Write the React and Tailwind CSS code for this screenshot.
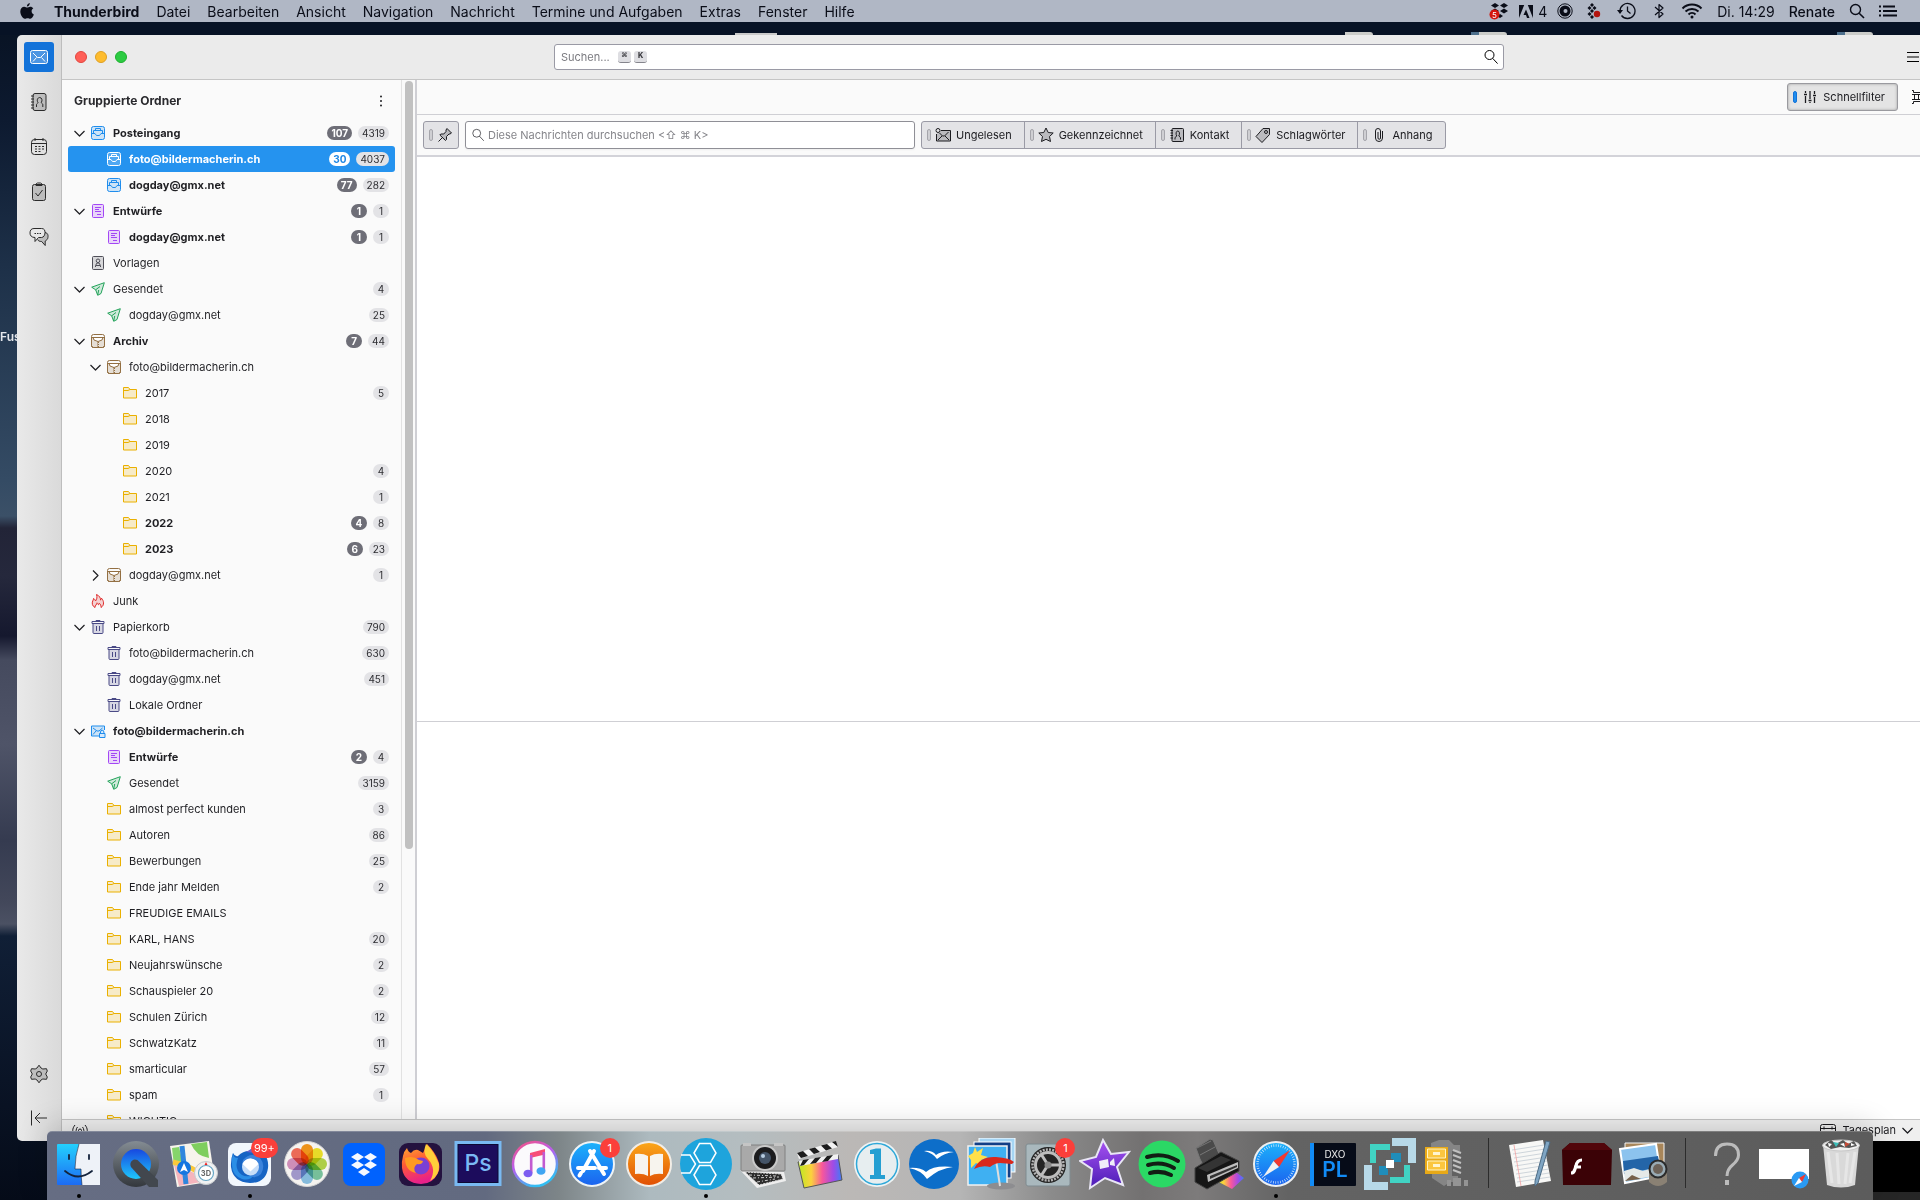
import { useState } from "react";

// ---------- data ----------

const menus = [
  "Datei",
  "Bearbeiten",
  "Ansicht",
  "Navigation",
  "Nachricht",
  "Termine und Aufgaben",
  "Extras",
  "Fenster",
  "Hilfe",
];

const folders = [
  { name: "Posteingang", icon: "inbox", level: 0, open: true, unread: 107, total: 4319 },
  { name: "foto@bildermacherin.ch", icon: "inbox", level: 1, unread: 30, total: 4037 },
  { name: "dogday@gmx.net", icon: "inbox", level: 1, unread: 77, total: 282 },
  { name: "Entwürfe", icon: "draft", level: 0, open: true, unread: 1, total: 1 },
  { name: "dogday@gmx.net", icon: "draft", level: 1, unread: 1, total: 1 },
  { name: "Vorlagen", icon: "template", level: 0 },
  { name: "Gesendet", icon: "sent", level: 0, open: true, total: 4 },
  { name: "dogday@gmx.net", icon: "sent", level: 1, total: 25 },
  { name: "Archiv", icon: "archive", level: 0, open: true, unread: 7, total: 44 },
  { name: "foto@bildermacherin.ch", icon: "archive", level: 1, open: true },
  { name: "2017", icon: "folder", level: 2, total: 5 },
  { name: "2018", icon: "folder", level: 2 },
  { name: "2019", icon: "folder", level: 2 },
  { name: "2020", icon: "folder", level: 2, total: 4 },
  { name: "2021", icon: "folder", level: 2, total: 1 },
  { name: "2022", icon: "folder", level: 2, unread: 4, total: 8 },
  { name: "2023", icon: "folder", level: 2, unread: 6, total: 23 },
  { name: "dogday@gmx.net", icon: "archive", level: 1, open: false, total: 1 },
  { name: "Junk", icon: "junk", level: 0 },
  { name: "Papierkorb", icon: "trash", level: 0, open: true, total: 790 },
  { name: "foto@bildermacherin.ch", icon: "trash", level: 1, total: 630 },
  { name: "dogday@gmx.net", icon: "trash", level: 1, total: 451 },
  { name: "Lokale Ordner", icon: "trash", level: 1 },
  { name: "foto@bildermacherin.ch", icon: "account", level: 0, open: true, bold: true },
  { name: "Entwürfe", icon: "draft", level: 1, unread: 2, total: 4 },
  { name: "Gesendet", icon: "sent", level: 1, total: 3159 },
  { name: "almost perfect kunden", icon: "folder", level: 1, total: 3 },
  { name: "Autoren", icon: "folder", level: 1, total: 86 },
  { name: "Bewerbungen", icon: "folder", level: 1, total: 25 },
  { name: "Ende jahr Melden", icon: "folder", level: 1, total: 2 },
  { name: "FREUDIGE EMAILS", icon: "folder", level: 1 },
  { name: "KARL, HANS", icon: "folder", level: 1, total: 20 },
  { name: "Neujahrswünsche", icon: "folder", level: 1, total: 2 },
  { name: "Schauspieler 20", icon: "folder", level: 1, total: 2 },
  { name: "Schulen Zürich", icon: "folder", level: 1, total: 12 },
  { name: "SchwatzKatz", icon: "folder", level: 1, total: 11 },
  { name: "smarticular", icon: "folder", level: 1, total: 57 },
  { name: "spam", icon: "folder", level: 1, total: 1 },
  { name: "WICHTIG", icon: "folder", level: 1 },
];

const indent = ["pl-[6px]", "pl-[22px]", "pl-[38px]"];

// ---------- small icons ----------

const folderColors = {
  inbox: "text-[#1f8ded]",
  draft: "text-[#a347f5]",
  template: "text-[#4f4f58]",
  sent: "text-[#22a35a]",
  archive: "text-[#936f42]",
  folder: "text-[#eab000]",
  junk: "text-[#e02b2b]",
  trash: "text-[#4a4a86]",
  account: "text-[#1f8ded]",
};

const tint = { fill: "currentColor", fillOpacity: 0.2 };

const folderShapes = {
  inbox: (
    <>
      <rect x="0.5" y="0.5" width="13" height="13" rx="2" {...tint} />
      <path d="M0.5 7.5H4l1.500 2h3L10 7.500h3.500M2.500 7V4.500h9V7M4.500 4V2.500h5V4" />
    </>
  ),
  draft: (
    <>
      <rect x="1.500" y="0.5" width="11" height="13" rx="1" {...tint} />
      <path d="M4 3.500h6M4 5.500h4M4 7.500h6M6 10.500h4" />
    </>
  ),
  template: (
    <>
      <rect x="1.500" y="0.5" width="11" height="13" rx="1" {...tint} />
      <circle cx="7" cy="4.8" r="1.8" />
      <path d="M4.500 11V9.500L6 7h2l1.500 2.500V11M5 9.500h4" />
    </>
  ),
  sent: <path d="M13.300 0.700L0.700 5.200l4 2.600 2 5.500L10 11.500zM4.700 7.800L9 4.500M6.700 13l1-5" {...tint} />,
  archive: (
    <>
      <rect x="0.5" y="0.5" width="13" height="13" rx="2" />
      <path d="M0.500 3.500h13v8a2 2 0 01-2 2h-9a2 2 0 01-2-2z" {...tint} />
      <path d="M2 3.500h10l-1 2.500-4 1.500L3 6z" fill="#fff" />
      <path d="M6.500 7.500v6M7.500 8v5.500" strokeDasharray="1 1" />
    </>
  ),
  folder: (
    <>
      <path d="M0.500 1.500h5L7 3.500h6.500v8.500h-13z" {...tint} />
      <path d="M0.500 4.500h4.500L7 3.500" />
    </>
  ),
  junk: (
    <path
      d="M4 13.500C1.300 12 .700 9.500 1.700 7c.4-.8.8-1.200.8-2.500C3.700 5 4.300 6 4.500 7 6 5.500 6.300 3 5.500.500c2.900 1.200 4.200 3.500 4 5.500.7-.4 1-.9 1-1.800 2.300 2.500 3.300 6.800-.5 9.300.2-1.800-.5-3.200-1.600-4.200-.2.900-.6 1.300-1 1.500-.2-.9-.7-1.600-1.300-2-.2 1.700-2.200 2.600-2.100 4.700z"
      {...tint}
    />
  ),
  trash: (
    <>
      <path d="M2 3.500h10v9a1 1 0 01-1 1H3a1 1 0 01-1-1z" {...tint} />
      <path d="M1 3.500v-2h12v2zM5 1.200V.500h4v.700M5.500 6v5M8.500 6v5" />
    </>
  ),
  account: (
    <>
      <path d="M8 12H0.500V2h13v4" {...tint} />
      <path d="M2 4l4 3h2l3.500-3M2 10.500L5 7" />
      <path d="M8.500 9.500h5.500v4H8.500zM9.500 9.500V8a1.700 1.700 0 013.400 0v1.500" fill="#d6e9fc" />
    </>
  ),
};

function FolderIcon({ name, selected }) {
  return (
    <svg
      viewBox="0 0 14 14"
      className={`w-[14px] h-[14px] shrink-0 overflow-visible ${selected ? "text-white" : folderColors[name]}`}
      fill="none"
      stroke="currentColor"
    >
      {folderShapes[name]}
    </svg>
  );
}

function Line({ children, className = "w-4 h-4", box = "0 0 16 16" }) {
  return (
    <svg viewBox={box} className={`shrink-0 ${className}`} fill="none" stroke="currentColor" strokeLinejoin="round">
      {children}
    </svg>
  );
}

const Magnifier = ({ className }) => (
  <Line className={className}>
    <circle cx="6.500" cy="6" r="4.500" />
    <path d="M9.800 9.500l4.500 4.800" strokeLinecap="round" />
  </Line>
);

const spaceIcons = {
  Adressbuch: (
    <>
      <rect x="4" y="1.500" width="13" height="17" rx="2" {...tint} />
      <path d="M2 4h3M2 7h3M2 10h3M2 13h3M2 16h3M7.500 15v-2.500c0-1 1.500-1 1.500-2-1.500-2-.500-5 1.700-5s3 3 1.600 5c0 1 1.500 1 1.500 2V15" />
    </>
  ),
  Kalender: (
    <>
      <rect x="2.500" y="2.500" width="15" height="15" rx="3" />
      <path d="M2.500 6.500h15M6 1v3M14 1v3" />
      <path d="M6 9.500h9M6 12h9M6 14.500h7" strokeDasharray="2 1.500" />
    </>
  ),
  Aufgaben: (
    <>
      <rect x="3.500" y="2.500" width="13" height="16" rx="2" {...tint} />
      <path d="M7 3.500V2l1.500-1h3L13 2v1.500zM6.500 11l2.500 3 4.500-6" />
    </>
  ),
  Chat: (
    <>
      <path d="M16 5.500c3 .5 3.500 3 2.700 6-.5 1.500-2 2-2.500 2.500V18.500l-3.500-4c-2 0-3.500-.5-4-2" {...tint} />
      <path d="M5 1.500h7.500c3 0 3.500 2 3.500 4s-1 5-3.500 5H9.500L6 14.500v-4c-3.500 0-5-2-5-4.500s1-4.500 4-4.500z" fill="#e8e8e8" />
      <path d="M5.500 6.500h6.500" strokeDasharray="1.500 1" />
    </>
  ),
};

function SpaceButton({ label, children, active }) {
  return (
    <button
      type="button"
      aria-label={label}
      className={`w-[30px] h-[30px] rounded-[3px] flex items-center justify-center ${
        active ? "bg-[#1373d9] text-white" : "text-[#2b2b2b]"
      }`}
    >
      <Line className="w-5 h-5" box="0 0 20 20">
        {children}
      </Line>
    </button>
  );
}

// ---------- menu bar ----------

function MenuBar() {
  return (
    <header className="h-[22px] shrink-0 flex items-center justify-between bg-[#b0b7c5] text-[14px] text-[#0a0d18] pl-[19px] pr-[23px] whitespace-nowrap">
      <nav className="flex items-center gap-[17px]">
        <svg viewBox="0 0 18 16" className="w-[18px] h-4" fill="currentColor">
          <path
            transform="translate(1)"
            d="M9.800 0c.1 1.800-1.300 3.400-2.900 3.500C6.700 1.800 8.200.2 9.800 0zM7.200 4.500c.7 0 1.700-.8 3.100-.8 1.200 0 2.300.6 3 1.600-2.500 1.500-2.100 5.200.6 6.200-.5 1.500-2 4.300-3.600 4.300-1 0-1.500-.6-2.700-.6s-1.700.6-2.700.6C2.700 15.800.300 11.800.300 8.600c0-3.200 2-4.900 3.900-4.900 1.300 0 2.300.8 3 .8z"
          />
        </svg>
        <button type="button" className="font-bold">Thunderbird</button>
        {menus.map((m) => (
          <button type="button" key={m}>{m}</button>
        ))}
      </nav>
      <div className="flex items-center gap-[14px]">
        <div className="flex items-center gap-[10px]">
          <svg viewBox="0 0 20 18" className="w-5 h-[18px]" fill="#0a0d18">
            <path d="M6 1l4 2.500L6 6 2 3.500zM15 1l4 2.500L15 6l-4-2.500zM6 6.500L10 9l-4 2.500L2 9zM15 6.500L19 9l-4 2.500L11 9zM11 12l3 2-3 2-3-2z" />
            <circle cx="5.500" cy="12.500" r="5" fill="#d3150f" />
            <text x="5.500" y="15.500" fontSize="8" fill="#fff" textAnchor="middle">5</text>
          </svg>
          <span className="flex items-center gap-[5px]">
            <svg viewBox="0 0 14 13" className="w-[14px] h-[13px]" fill="currentColor">
              <path d="M0 0h5.200L0 13zM14 0v13L8.800 0zM7 4.500L10.500 13H8L7 10H4.500z" />
            </svg>
            4
          </span>
          <svg viewBox="0 0 16 16" className="w-4 h-4">
            <circle cx="8" cy="8" r="7.200" fill="none" stroke="#0a0d18" />
            <circle cx="8" cy="8" r="5.500" fill="#0a0d18" />
            <circle cx="8.500" cy="8" r="2" fill="#b0b7c5" />
          </svg>
        </div>
        <svg viewBox="0 0 14 16" className="w-[14px] h-4" fill="#0a0d18">
          <path d="M5 0l2 2-2 2-2-2zM2.500 3l2 2-2 2-2-2zM7.500 3l2 2-2 2-2-2zM5 6l2 2-2 2-2-2zM2.500 9l2 2-2 2-2-2zM5 12l2 2-2 2-2-2z" />
          <circle cx="10" cy="11" r="3.200" fill="#b3130e" />
        </svg>
        <Line className="w-[22px] h-[18px]" box="0 0 22 18">
          <path d="M5 9a7.500 7.500 0 111.500 4.500M12.500 4.500V9l3 2.500" strokeWidth="1.300" />
          <path d="M2 8h6l-3 4z" fill="currentColor" stroke="none" />
        </Line>
        <Line className="w-4 h-4">
          <path d="M4 4l8 7-4 3.500v-13L12 5l-8 7" strokeWidth="1.200" />
        </Line>
        <Line className="w-[22px] h-4" box="0 0 22 16">
          <path d="M1.500 5.500a13.500 13.500 0 0119 0M4.500 8.500a9.500 9.500 0 0113 0M7.500 11.500a5 5 0 017 0" strokeWidth="2" />
          <circle cx="11" cy="14" r="1.500" fill="currentColor" stroke="none" />
        </Line>
        <span>Di. 14:29</span>
        <span className="font-medium">Renate</span>
        <Line className="w-4 h-4">
          <circle cx="6.500" cy="6.500" r="5" strokeWidth="1.400" />
          <path d="M10.200 10.200L15 15" strokeWidth="1.600" />
        </Line>
        <Line className="w-[18px] h-3" box="0 0 18 12">
          <path d="M0 1.500h2M4 1.500h12M0 6h2M4 6h14M0 10.500h2M4 10.500h14" strokeWidth="2" />
        </Line>
      </div>
    </header>
  );
}

// ---------- thunderbird window ----------

function SpacesBar() {
  return (
    <aside className="w-[45px] shrink-0 flex flex-col justify-between items-center pt-[7px] pb-2 border-r border-[#bdbdbd] bg-linear-to-r from-[#e9e9e9] to-[#dadada]">
      <div className="flex flex-col gap-[15px]">
        <SpaceButton label="Mail" active>
          <rect x="1.500" y="3.500" width="17" height="13" rx="2" fill="#fff" fillOpacity="0.25" />
          <path d="M4 6l4.500 4.500h3L16 6M4 14.500l3.500-4M16 14.500l-3.500-4" />
        </SpaceButton>
        {Object.entries(spaceIcons).map(([label, shape]) => (
          <SpaceButton key={label} label={label}>{shape}</SpaceButton>
        ))}
      </div>
      <div className="flex flex-col gap-[14px]">
        <SpaceButton label="Einstellungen">
          <path
            d="M8 4L10 1.200 12 4l1.800 1 3.700-.300.800 2.300-1.600 3 1.600 3-.8 2.300-3.700-.3L12 16l-2 2.800L8 16l-1.800-1-3.700.3-.8-2.300 1.600-3-1.600-3 .8-2.300 3.700.3z"
            {...tint}
          />
          <circle cx="10" cy="10" r="2.500" />
        </SpaceButton>
        <SpaceButton label="Leiste ausblenden">
          <path d="M2.500 2.500v15M18 10H6M11 5l-5 5 5 5" />
        </SpaceButton>
      </div>
    </aside>
  );
}

const Key = ({ children }) => (
  <kbd className="w-[13px] h-3 rounded-[3px] bg-[#dedee2] border-b border-[#85858c] text-[9px] leading-[11px] font-bold text-center text-[#3a3a3f]">
    {children}
  </kbd>
);

function TitleBar() {
  return (
    <div className="h-[45px] shrink-0 flex items-center bg-[#ebebeb] border-b border-[#c5c5c5]">
      <div className="w-[492px] shrink-0 flex gap-2 pl-[13px]">
        <button type="button" aria-label="Schließen" className="w-3 h-3 rounded-full border border-[#e2463f] bg-[#ff5f57]" />
        <button type="button" aria-label="Minimieren" className="w-3 h-3 rounded-full border border-[#dfa023] bg-[#febc2e]" />
        <button type="button" aria-label="Maximieren" className="w-3 h-3 rounded-full border border-[#1daf2e] bg-[#2ccb42]" />
      </div>
      <div className="relative flex-1 h-[26px] flex items-center bg-white border border-[#9a9aa5] rounded-[3px] pr-1">
        <input
          type="search"
          aria-label="Suchen"
          placeholder="Suchen..."
          className="w-full h-full pl-[6px] bg-transparent text-[11px] placeholder-[#7b7b80] focus:outline-none"
        />
        <span className="absolute left-[63px] flex gap-[3px]">
          <Key>⌘</Key>
          <Key>K</Key>
        </span>
        <button type="button" aria-label="Suche starten">
          <Magnifier className="w-4 h-4" />
        </button>
      </div>
      <div className="w-[416px] shrink-0 flex justify-end">
        <button type="button" aria-label="Menü">
          <Line className="w-[13px] h-4" box="0 0 13 16">
            <path d="M0 3.500h12M0 8h12M0 12.500h12" strokeWidth="1.200" />
          </Line>
        </button>
      </div>
    </div>
  );
}

function FolderRow({ folder, selected, onSelect }) {
  const strong = folder.unread || folder.bold;
  return (
    <li>
      <button
        type="button"
        onClick={onSelect}
        className={`w-full h-[26px] flex items-center pr-[6px] rounded-[3px] text-[11px] text-left ${indent[folder.level]} ${
          selected ? "bg-[#2593ef] text-white" : "text-[#1f1f23]"
        } ${strong ? "font-bold" : ""}`}
      >
        <span className="w-[17px] shrink-0">
          {folder.open !== undefined && (
            <Line className="w-[11px] h-[11px]" box="0 0 11 11">
              <path d={folder.open ? "M0.500 3l5 5 5-5" : "M3 0.500l5 5-5 5"} strokeWidth="1.200" />
            </Line>
          )}
        </span>
        <FolderIcon name={folder.icon} selected={selected} />
        <span className="flex-1 pl-2 truncate">{folder.name}</span>
        {folder.unread && (
          <span
            className={`h-[14px] min-w-4 px-1 rounded-full text-[10px] leading-[14px] text-center font-bold ${
              selected ? "bg-white text-[#1d86e4]" : "bg-[#6e6e77] text-white"
            }`}
          >
            {folder.unread}
          </span>
        )}
        {folder.total && (
          <span className="ml-[6px] h-[14px] min-w-4 px-1 rounded-full bg-[#e3e3e6] text-[#2d2d31] text-[10px] leading-[14px] text-center font-normal">
            {folder.total}
          </span>
        )}
      </button>
    </li>
  );
}

function FolderPane() {
  const [current, setCurrent] = useState(1);

  return (
    <section className="w-[355px] shrink-0 flex bg-[#fafafa] border-r-2 border-[#cfcfd4]">
      <div className="flex-1 min-w-0 overflow-hidden border-r border-[#e2e2e2]">
        <div className="h-10 pt-[2px] flex items-center justify-between pl-3 pr-[13px]">
          <h2 className="text-[12px] font-bold text-[#2a2a2e]">Gruppierte Ordner</h2>
          <button type="button" aria-label="Ordneroptionen">
            <svg viewBox="0 0 14 14" className="w-[14px] h-[14px]" fill="#1f1f23">
              <circle cx="7" cy="2.500" r="1" />
              <circle cx="7" cy="7" r="1" />
              <circle cx="7" cy="11.500" r="1" />
            </svg>
          </button>
        </div>
        <ul className="pl-[6px] pr-[6px]">
          {folders.map((f, i) => (
            <FolderRow key={i} folder={f} selected={i === current} onSelect={() => setCurrent(i)} />
          ))}
        </ul>
      </div>
      <div className="w-[13px] shrink-0 pt-px px-[3px]">
        <div className="h-[74%] w-2 rounded-full bg-[#c1c1c1]" />
      </div>
    </section>
  );
}

const filters = [
  {
    label: "Ungelesen",
    icon: (
      <>
        <path d="M6 3.500h9.500v10.500H1.500V7" {...tint} />
        <circle cx="3" cy="3.500" r="2" />
        <path d="M4.500 6l3 3h2l4-4M3 13l4-4M14 13l-4-4" />
      </>
    ),
  },
  {
    label: "Gekennzeichnet",
    icon: <path d="M8 1l2.200 4.500 5 .5-3.700 3.500 1 5L8 12.300 3.500 14.500l1-5L.800 6l5-.5z" {...tint} />,
  },
  {
    label: "Kontakt",
    icon: (
      <>
        <rect x="3" y="1.500" width="11.500" height="13" rx="1" {...tint} />
        <path d="M1.500 3.500H4M1.500 6H4M1.500 8.500H4M1.500 11H4M6 12.500v-2l1.800-1.500C6.500 7 7 4 8.800 4s2.200 3 1 5l1.700 1.500v2" />
      </>
    ),
  },
  {
    label: "Schlagwörter",
    icon: (
      <>
        <path d="M14.500 1.500v6L7 15.500l-6-6 7-8z" {...tint} />
        <circle cx="11" cy="5" r="1.500" />
      </>
    ),
  },
  {
    label: "Anhang",
    icon: <path d="M11.500 4v7a3.500 3.500 0 01-7 0V4a2.500 2.500 0 015 0v7a1.200 1.200 0 01-2.500 0V5" />,
  },
];

const Indicator = () => <span className="w-1 h-3 rounded-[2px] border border-[#a5a5ab] bg-[#cfcfd3]" />;

function MailArea() {
  return (
    <main className="flex-1 min-w-0 flex flex-col bg-white text-[11px] text-[#1b1b1f]">
      <div className="h-[35px] shrink-0 flex items-center justify-end gap-[14px] bg-[#fafafa] border-b border-[#cfcfd4]">
        <button
          type="button"
          className="h-7 flex items-center gap-[5px] pl-[5px] pr-3 rounded-[3px] border border-[#9a9a9f] bg-[#e4e4e4] shadow-[inset_0_0_3px_rgba(0,0,0,0.3)]"
        >
          <span className="w-1 h-3 rounded-[2px] bg-[#1f8ded] border border-[#1373d9]" />
          <Line className="w-4 h-4">
            <path d="M3.500 2v2M3.500 7v7M8 2v8M8 13v1M12.500 2v3M12.500 8v6M2 5.500h3M6.500 11.500h3M11 6.500h3" strokeWidth="1.300" />
          </Line>
          Schnellfilter
        </button>
        <button type="button" aria-label="Anzeigeoptionen">
          <Line className="w-2 h-[14px]" box="0 0 8 14">
            <path d="M0 0.500h1.500v2H8M0 13.500h1.500v-2H8M0 4.500h8M0 9.500h8M2.500 4.500v5M6.500 4.500v5" />
          </Line>
        </button>
      </div>

      <form className="h-[42px] shrink-0 flex items-center gap-[6px] px-[6px] bg-[#fafafa] border-b-2 border-[#d3d3d9]" onSubmit={(e) => e.preventDefault()}>
        <button
          type="button"
          aria-label="Filter anheften"
          className="w-9 h-7 flex items-center justify-center gap-[4px] rounded-[3px] border border-[#9a9aa5] bg-[#e3e3e6]"
        >
          <Indicator />
          <Line className="w-4 h-4">
            <path d="M10 1.500l4.500 4.500-1.500 1-1 0-2.500 2.500v3l-1 1L2.800 8l1-1h3L9 4.500V3zM5.500 10.500L1.500 14.500" {...tint} />
          </Line>
        </button>
        <label className="w-[450px] h-7 flex items-center gap-[3px] pl-[5px] rounded-[3px] border border-[#8f8f96] bg-white shadow-xs text-[#4b4b50]">
          <Magnifier className="w-[14px] h-[14px]" />
          <input
            type="text"
            aria-label="Diese Nachrichten durchsuchen"
            placeholder="Diese Nachrichten durchsuchen <⇧ ⌘ K>"
            className="flex-1 h-full bg-transparent placeholder-[#85858a] focus:outline-none"
          />
        </label>
        <div className="h-7 flex rounded-[3px] border border-[#9a9aa5] bg-[#e3e3e6] divide-x divide-[#9a9aa5]">
          {filters.map((f) => (
            <button type="button" key={f.label} className="flex items-center pl-[5px] pr-3">
              <Indicator />
              <span className="pl-1 pr-[5px]">
                <Line>{f.icon}</Line>
              </span>
              {f.label}
            </button>
          ))}
        </div>
      </form>

      <section aria-label="Nachrichtenliste" className="h-[565px] shrink-0 border-b border-[#cfcfd4]" />
      <section aria-label="Nachricht" className="flex-1" />
    </main>
  );
}

function StatusBar() {
  return (
    <footer className="h-[22px] shrink-0 flex items-center justify-between pl-[10px] pr-[7px] bg-[#efefef] border-t border-[#c5c5c5] text-[11px] text-[#1b1b1f]">
      <Line className="w-4 h-4">
        <path d="M3 2C0 5.500 0 9.500 3 13M5.500 4c-1.800 2-1.800 5 0 7M13 2c3 3.500 3 7.500 0 11M10.500 4c1.800 2 1.800 5 0 7" />
        <circle cx="8" cy="7.500" r="1.500" />
      </Line>
      <button type="button" className="flex items-center gap-[6px]">
        <Line>
          <rect x="0.500" y="1.500" width="15" height="13" rx="2" />
          <path d="M.500 5.500h15M4 3.500v3M12 3.500v3M8 9h1" />
        </Line>
        Tagesplan
        <Line className="w-[11px] h-[11px]" box="0 0 11 11">
          <path d="M0.500 3l5 5 5-5" strokeWidth="1.200" />
        </Line>
      </button>
    </footer>
  );
}

// ---------- dock ----------

const hexagon = "M-11 0l5.500-9.500h11L11 0 5.500 9.500h-11z";
const petals = [
  ["#f79a1c", 0],
  ["#f1e62b", 45],
  ["#b5d84a", 90],
  ["#7cc9a4", 135],
  ["#8cc5ea", 180],
  ["#a79fd6", 225],
  ["#d795c4", 270],
  ["#f5705c", 315],
];

const dockApps = [
  {
    name: "Finder",
    running: true,
    art: (
      <>
        <rect x="4" y="6" width="43" height="41" rx="1" fill="url(#finder)" />
        <path d="M26 6h21v41H29q-1-9-1-16h-6Q22 18 26 6z" fill="#eef2f8" />
        <path d="M16 17v4M36 17v4M12 33q13 11 27 0" stroke="#14233c" strokeWidth="1.800" fill="none" strokeLinecap="round" />
        <path d="M26 6q-4 12-4 25h6q0 8 1 16" stroke="#14233c" strokeWidth=".6" fill="none" />
      </>
    ),
  },
  {
    name: "QuickTime Player",
    art: (
      <>
        <circle cx="26" cy="26" r="23" fill="url(#steel)" />
        <circle cx="26" cy="26" r="15" fill="url(#blueball)" />
        <path d="M20.500 25q2-5 7-3L48 42v7h-9L21 29q-1-2-.5-4z" fill="#42474e" />
      </>
    ),
  },
  {
    name: "Karten",
    art: (
      <>
        <path d="M3 8l39-5 6 40-38 6z" fill="#f7f4ec" />
        <path d="M24 6l16-2 2 16q-13-2-18-14z" fill="#7fce5e" />
        <path d="M5 10l7-1 4 16-9 3z" fill="#86d46b" />
        <path d="M7 27l10 3 16 8 1 6-22 4z" fill="#f5b5bd" />
        <path d="M6 24q20 4 36 18" stroke="#fbc93a" strokeWidth="5" fill="none" />
        <path d="M15 8l4 38" stroke="#2f86dd" strokeWidth="5" />
        <circle cx="17" cy="30" r="7" fill="#1576e0" />
        <path d="M17 25l4 9-4-2-4 2z" fill="#fff" />
        <circle cx="39" cy="35" r="11.500" fill="#f0f1f2" stroke="#c5c9cc" />
        <circle cx="39" cy="35" r="7.500" fill="#fff" stroke="#65a5c4" strokeWidth="1.200" />
        <text x="39" y="38" fontSize="7.500" fontWeight="700" textAnchor="middle" fill="#666">3D</text>
        <path d="M39 24l1.500 3h-3z" fill="#e22" />
      </>
    ),
  },
  {
    name: "Thunderbird",
    running: true,
    badge: "99+",
    art: (
      <>
        <rect x="4" y="5" width="43" height="43" rx="8" fill="#f2f7fd" />
        <path d="M9 15q2 4 5 3 5-5 11-5 4-5 10-3l5 5q5 7 4 15-2 15-18 15Q9 44 7 29q-.5-8 2-14z" fill="#1664c4" />
        <path d="M9 15q0 5 5 5-3 7 0 13 5 8 16 4-4 6-12 4Q8 37 8 27q-.5-7 1-12z" fill="#2b8ee6" />
        <path d="M22 14q6-5 12-3-1 4 2 7-6-4-14-4z" fill="#6a63c9" />
        <path d="M19 22q8-9 17-2 6 7 1 16-6 6-13 1-8-5-5-15z" fill="#3b83dc" />
        <circle cx="26.500" cy="29" r="8.500" fill="#c8def8" />
        <path d="M18.500 26l8 7.500 8-7.500q-2-5-8-5.500-6 .5-8 5.500z" fill="#fff" />
      </>
    ),
  },
  {
    name: "Fotos",
    art: (
      <>
        <circle cx="26" cy="26" r="22.500" fill="#f5f3f0" stroke="#d5d5d5" />
        {petals.map(([color, angle]) => (
          <rect
            key={angle}
            x="20"
            y="6"
            width="12"
            height="20"
            rx="6"
            fill={color}
            className="mix-blend-multiply"
            transform={`rotate(${angle} 26 26)`}
          />
        ))}
      </>
    ),
  },
  {
    name: "Dropbox",
    art: (
      <>
        <rect x="5" y="5" width="42" height="43" rx="8" fill="#0062fe" />
        <path
          d="M19.500 15l6.500 4-6.500 4-6.500-4zM32.500 15l6.500 4-6.500 4-6.500-4zM19.500 23l6.500 4-6.500 4-6.500-4zM32.500 23l6.500 4-6.500 4-6.500-4zM26 30l6 4-6 4-6-4z"
          fill="#f5f9ff"
        />
      </>
    ),
  },
  {
    name: "Firefox",
    art: (
      <>
        <rect x="4" y="5" width="43" height="43" rx="9" fill="#24123f" />
        <path d="M8 18q1-5 4-8 1 4 4 5 3-4 7-3l5 3 4-9q8 8 11 16 3 7 0 13-5 11-17 11Q9 45 7 30q-.5-7 1-12z" fill="url(#fox)" />
        <path d="M31 6q8 7 13 20 1 12-9 17 7-12-2-22-6-6-2-15z" fill="#ffcf3a" />
        <circle cx="26" cy="28" r="8.500" fill="#7a3fd4" />
        <path d="M10 20q8-3 14 2l4 1q-1 4-6 3-5 4-1 9Q10 33 10 20z" fill="#ff9a22" />
      </>
    ),
  },
  {
    name: "Photoshop",
    art: (
      <>
        <rect x="2.500" y="3" width="47" height="45" fill="#79b9f2" />
        <rect x="6" y="6.500" width="40" height="38" fill="#1c0c5c" stroke="#0d0833" />
        <text x="26" y="33" fontSize="23" fontWeight="500" textAnchor="middle" fill="#7ab9f4">Ps</text>
      </>
    ),
  },
  {
    name: "iTunes",
    art: (
      <>
        <circle cx="26" cy="26" r="22" fill="#fbfafc" stroke="url(#tunes)" strokeWidth="2.500" />
        <path d="M21 15l15-4v5.500L21 20z" fill="#f74d78" />
        <path d="M22.200 17v18M34.800 14v19" stroke="#c25ad0" strokeWidth="2.600" />
        <ellipse cx="19" cy="35.500" rx="4.500" ry="3.800" fill="#7d5df0" />
        <ellipse cx="32" cy="33" rx="4.500" ry="3.800" fill="#3fa5f2" />
      </>
    ),
  },
  {
    name: "App Store",
    badge: "1",
    art: (
      <>
        <circle cx="26" cy="26" r="22" fill="url(#store)" stroke="#eef3f6" strokeWidth="2" />
        <path d="M28 13L17 33M24 13l14 23M12 30h17M33 30h7M15 35l-1.500 2.500" stroke="#fff" strokeWidth="4" strokeLinecap="round" />
      </>
    ),
  },
  {
    name: "Bücher",
    art: (
      <>
        <circle cx="26" cy="26" r="22" fill="url(#books)" stroke="#f2ede6" strokeWidth="2" />
        <path d="M25 18q-5-3-13-2v20q8-1 13 2zM27 18q5-3 13-2v20q-8-1-13 2z" fill="#f7f4ee" />
      </>
    ),
  },
  {
    name: "Hexonet",
    running: true,
    art: (
      <>
        <circle cx="26" cy="26" r="26" fill="#1ea4dc" />
        <g fill="none" stroke="#fff" strokeWidth="1.500">
          <path d={hexagon} transform="translate(25 15)" />
          <path d={hexagon} transform="translate(25 37)" />
          <path d="M1 17h9l5.500 9-5.500 9H1" />
        </g>
      </>
    ),
  },
  {
    name: "Digitale Bilder",
    art: (
      <>
        <path d="M3 32l44 2 2 9-29 7z" fill="#eee" />
        <path d="M8 34l36 2 2 5-24 6z" fill="#2d2d2d" stroke="#ddd" strokeDasharray="2 1" />
        <path d="M12 37l28 1M16 40l26-1M20 44l18-3" stroke="#cfcfcf" strokeDasharray="3 2 1 2" />
        <rect x="4" y="7" width="44" height="26" rx="1" fill="#a9a9a9" stroke="#808080" />
        <path d="M6 5h8v3H6zM37 5h9v3h-9z" fill="#c5c5c5" />
        <circle cx="28" cy="20" r="13" fill="#c9c9c9" />
        <circle cx="28" cy="20" r="11" fill="#1b1b1d" />
        <circle cx="28" cy="20" r="6" fill="#445468" />
        <circle cx="26" cy="18" r="2" fill="#b6cbe0" />
      </>
    ),
  },
  {
    name: "Final Cut Pro",
    art: (
      <>
        <path d="M4 24l40-7 4 25-38 8z" fill="url(#rainbow)" stroke="#555" />
        <path d="M3 15L42 3l2 6L5 21z" fill="#f2f2f2" />
        <path d="M3 15l6-2 5 5-7 2zM15 11l6-1.500 5 4.500-6 2zM27 7.500l6-1.500 5 4.500-6 2zM38 4l4-1 2 6z" fill="#1d1d1d" />
        <path d="M5 23l39-7v5L6 28z" fill="#f2f2f2" />
        <path d="M9 22l6-1-5 6-4 1zM21 20l6-1-5 6-6 1zM33 18l6-1-5 6-6 1z" fill="#1d1d1d" />
      </>
    ),
  },
  {
    name: "Capture One",
    art: (
      <>
        <circle cx="26" cy="26" r="23" fill="#eef3f4" />
        <circle cx="26" cy="26" r="20.500" fill="#e7eef0" stroke="#2fa8d8" strokeWidth="1.500" />
        <path d="M19 12l6-1.500h5V37h4v4H19v-4h4V16h-4z" fill="#249fd2" />
      </>
    ),
  },
  {
    name: "OpenOffice",
    art: (
      <>
        <circle cx="26" cy="26" r="25" fill="#0d6ec9" />
        <path d="M16 13q8-1 12 4 6-5 18-3-10 1-17 7-4-6-13-8zM1 30q11-1 17 4 8-7 27-5-13 1-26 12-6-9-18-11z" fill="#fff" />
      </>
    ),
  },
  {
    name: "Bildmischer",
    art: (
      <>
        <rect x="14" y="0" width="36" height="34" fill="#a5d5f4" stroke="#fff" />
        <rect x="9" y="4" width="37" height="36" fill="#113f87" stroke="#fff" />
        <rect x="3" y="8" width="39" height="39" fill="#3fb0f2" stroke="#f2f2f2" strokeWidth="1.500" />
        <path d="M10 9l2 5 6-4-2 7 7 2-7 3 1 6-6-3-5 5v-8l-3-4 5-3z" fill="#ffe04a" />
        <ellipse cx="36" cy="48" rx="14" ry="3.500" fill="#8d8d90" />
        <path d="M31 22l4 26" stroke="#ddd" strokeWidth="2" />
        <path d="M9 31q6-13 22-12 14 1 18 5l-2 2-12-1q-5 0-10 4-8-2-16 2z" fill="#d9281d" />
      </>
    ),
  },
  {
    name: "Systemeinstellungen",
    badge: "1",
    art: (
      <>
        <rect x="4" y="6" width="44" height="42" rx="2" fill="#a9b8bd" stroke="#7f8b90" />
        <circle cx="26" cy="27" r="18" fill="#242424" />
        <circle cx="26" cy="27" r="15.500" fill="none" stroke="#b3b3b3" strokeWidth="2.500" strokeDasharray="2 1.200" />
        <circle cx="26" cy="27" r="12.500" fill="none" stroke="#bdbdbd" strokeWidth="3" />
        <path d="M26 27l-7-11M26 27h13M26 27l-7 11" stroke="#bdbdbd" strokeWidth="3" />
        <circle cx="26" cy="27" r="3.500" fill="#8a8a8a" />
      </>
    ),
  },
  {
    name: "iMovie",
    art: (
      <>
        <path d="M24 2l8 14 18-2-12 15 6 18-18-7-15 10 2-19L1 23l16-4z" fill="url(#movie)" stroke="#e9e6f5" strokeWidth="2" />
        <path d="M20 23l9-2 1 8-9 2zM31 24l4-4 1 8-5-1z" fill="#f0edf9" />
      </>
    ),
  },
  {
    name: "Spotify",
    art: (
      <>
        <circle cx="26" cy="26" r="23.500" fill="#2bd865" />
        <path d="M11 19q16-5 31 4M12 27q14-4 26 3M14 35q11-3 21 2" stroke="#121d14" strokeWidth="4" fill="none" strokeLinecap="round" />
      </>
    ),
  },
  {
    name: "Drucker",
    art: (
      <>
        <path d="M3 10l14-9 3 1 7 16-16 11-4-8z" fill="#4a4a4a" stroke="#777" />
        <path d="M4 10l14-7M7 17l15-8" stroke="#777" />
        <path d="M22 42l18-10 11 8-12 11z" fill="url(#rainbow)" />
        <path d="M2 30l26-16 18 9v10L14 51 2 44z" fill="#161616" stroke="#444" />
        <path d="M14 37l31-13v6L15 44z" fill="#bdbdbd" />
        <path d="M17 38l27-11v2L17 41z" fill="#333" />
        <path d="M5 30l23-12 10 4-24 12z" fill="#343434" />
      </>
    ),
  },
  {
    name: "Safari",
    running: true,
    art: (
      <>
        <circle cx="26" cy="26" r="22" fill="url(#store)" stroke="#eceff1" strokeWidth="2" />
        <circle cx="26" cy="26" r="18.500" fill="none" stroke="#d5ebfb" strokeWidth="2.500" strokeDasharray="0.700 1.700" />
        <path d="M40 12L23.500 23l5.500 6z" fill="#f2382f" />
        <path d="M13 39l10.500-16 5.500 6z" fill="#f1f1f1" />
      </>
    ),
  },
  {
    name: "DxO PhotoLab",
    art: (
      <>
        <rect x="3" y="5" width="46" height="43" rx="1" fill="#060b18" />
        <rect x="3" y="5" width="4" height="43" fill="#128cf7" />
        <text x="28" y="20" fontSize="10" textAnchor="middle" fill="#e8e8e8">DXO</text>
        <text x="28" y="39" fontSize="21" fontWeight="600" textAnchor="middle" fill="#128cf7">PL</text>
      </>
    ),
  },
  {
    name: "Ausrichten",
    art: (
      <>
        <path d="M28 0h24v25h-8V8H28zM0 27h8v17h16v8H0z" fill="#b7d9e8" />
        <path d="M6 6h20v6H12v13H6zM46 27v18H26v-6h14V27z" fill="#41d3c3" />
        <path d="M27 15h10v9h-8v-3h-2zM15 28h8v3h1v6h-9z" fill="#1f8dba" />
        <rect x="22" y="22" width="8" height="8" fill="#fff" />
      </>
    ),
  },
  {
    name: "Archivierer",
    art: (
      <>
        <path d="M10 5l8-3h10l5 5h6v6h-8v25h6v6h-8l-6 4-12-8z" fill="#858585" />
        <rect x="4" y="9" width="23" height="27" fill="#e8a917" />
        <path d="M6.500 11h18v9h-18zM6.500 23h18v9h-18z" fill="#fbc63f" stroke="#fff3c4" />
        <path d="M12 14h7v3h-7zM12 26h7v3h-7z" fill="#fff4cf" />
        <path d="M32 12l8 3M32 17l8 3M32 22l8 3M32 27l8 3M32 32l8 3" stroke="#c1c1c1" strokeWidth="2" />
        <path d="M26 42h4v6h-4zM32 40h8v8h-8zM43 42h4v6h-4z" fill="#949494" />
      </>
    ),
  },
  null,
  {
    name: "TextEdit",
    art: (
      <>
        <path d="M5 7l34-5 8 41-35 6z" fill="#f8f8f6" />
        <path d="M8 12l32-5M9 16l32-5M10 20l32-5M10 24l33-5M11 28l32-5M12 32l32-5M12 36l33-5M13 40l32-5M13 44l33-5" stroke="#c3ccd3" strokeWidth=".8" />
        <path d="M10 7l7 41" stroke="#f3a0a0" strokeWidth=".8" />
        <path d="M42 3l4 1-12 41-3 3 0-5z" fill="#7fa5c3" stroke="#4c6b84" />
      </>
    ),
  },
  {
    name: "Flash Player",
    art: (
      <>
        <path d="M1 12l8-7h34l8 7-1 35H2z" fill="#3b0206" />
        <path d="M1 12l8-7h34l8 7z" fill="#52060b" />
        <path d="M21 22q-5 0-6 6l-1 3q-1 4-4 4M13 29h7" stroke="#fff" strokeWidth="3.200" fill="none" />
      </>
    ),
  },
  {
    name: "Vorschau",
    art: (
      <>
        <path d="M7 5h39v32H7z" fill="#a8865a" stroke="#f5f5f5" />
        <path d="M2 11l36-5 5 32-36 7z" fill="#8cc3ee" stroke="#fff" strokeWidth="2" />
        <path d="M5 23l35-5 2 11-36 7z" fill="#2465a8" />
        <path d="M6 33l10-3 9 3 14-4 2 8-34 6z" fill="#e5e9e8" />
        <path d="M7 43l7-6 9 4z" fill="#77604a" />
        <path d="M31 32h18v12q-9 8-18 0z" fill="#8a8174" />
        <circle cx="40" cy="31" r="8.500" fill="#99aab3" stroke="#2b2b2b" strokeWidth="2" />
        <circle cx="40" cy="31" r="5" fill="#6d6258" />
      </>
    ),
  },
  null,
  {
    name: "Unbekannte App",
    art: (
      <>
        <path d="M14.500 18q0-12 11.500-12t11.500 11q0 5-6 10-5.500 4.500-5.500 11" fill="none" stroke="#bcbcbc" strokeWidth="3" />
        <rect x="24" y="42" width="4" height="5" fill="#bcbcbc" />
      </>
    ),
  },
  {
    name: "Safari-Fenster",
    art: (
      <>
        <rect x="1" y="11" width="50" height="30" fill="#fff" />
        <circle cx="42" cy="42" r="8.500" fill="#2a9af3" />
        <path d="M48 36l-7 4 3 4z" fill="#f2382f" />
        <path d="M36 48l5-8 3 4z" fill="#fff" />
      </>
    ),
  },
  {
    name: "Papierkorb",
    art: (
      <>
        <path d="M8 6h36l-4 41q-14 5-28 0z" fill="#d9d9d9" />
        <path d="M13 14l4 31M22 15l2 31M33 15l-3 31M40 14l-5 31" stroke="#e6e6e6" strokeWidth="3" />
        <ellipse cx="26" cy="7.500" rx="18.500" ry="5.500" fill="#efefef" stroke="#c7c7c7" />
        <path d="M10 7l6-5 5 4 7-4 5 4 6-3 3 5-8 2-9-1-9 2z" fill="#555" />
        <path d="M18 4l6 1-3 4z" fill="#3cbdb8" />
        <path d="M30 4l5 2-5 3z" fill="#c24b37" />
        <path d="M13 5l4 1-3 3zM25 6l4-1 1 4zM36 5l4 2-4 1z" fill="#fff" />
      </>
    ),
  },
];

function DockGradients() {
  return (
    <svg className="absolute w-0 h-0" aria-hidden="true">
      <defs>
        <linearGradient id="finder" x2="0" y2="1">
          <stop stopColor="#23d0fd" />
          <stop offset="1" stopColor="#1d6bf3" />
        </linearGradient>
        <linearGradient id="steel" x2="0" y2="1">
          <stop stopColor="#848c93" />
          <stop offset="1" stopColor="#33373c" />
        </linearGradient>
        <linearGradient id="blueball" x2="0" y2="1">
          <stop stopColor="#1747e0" />
          <stop offset="1" stopColor="#1fc8fb" />
        </linearGradient>
        <linearGradient id="fox" x2="0.300" y2="1">
          <stop stopColor="#ffb42e" />
          <stop offset="0.500" stopColor="#ff5a35" />
          <stop offset="1" stopColor="#e8208a" />
        </linearGradient>
        <linearGradient id="tunes" x2="0.500" y2="1">
          <stop stopColor="#f9507a" />
          <stop offset="0.500" stopColor="#b75ff0" />
          <stop offset="1" stopColor="#33bdf2" />
        </linearGradient>
        <linearGradient id="store" x2="0" y2="1">
          <stop stopColor="#1cb3fb" />
          <stop offset="1" stopColor="#1b62ef" />
        </linearGradient>
        <linearGradient id="books" x2="0" y2="1">
          <stop stopColor="#fba81a" />
          <stop offset="1" stopColor="#e04e03" />
        </linearGradient>
        <linearGradient id="movie" x2="0" y2="1">
          <stop stopColor="#a852f2" />
          <stop offset="1" stopColor="#4a1cb5" />
        </linearGradient>
        <linearGradient id="rainbow">
          <stop stopColor="#b9ea1f" />
          <stop offset="0.300" stopColor="#fbd23c" />
          <stop offset="0.550" stopColor="#f8579b" />
          <stop offset="0.800" stopColor="#a04be6" />
          <stop offset="1" stopColor="#3e7df5" />
        </linearGradient>
      </defs>
    </svg>
  );
}

function Dock() {
  return (
    <div className="absolute bottom-0 left-[47px] right-[47px] h-[69px] flex pt-[6px] px-1 rounded-t-[5px] border-t border-white/20 bg-[linear-gradient(to_right,#666d83_0%,#626a80_24%,#7d8588_28%,#adbabf_33%,#b4bdc0_38%,#bbb8b6_44%,#b5b5b5_50%,#8b8b8b_55%,#737171_60%,#7d7b7b_63%,#636363_68%,#5c5c5c_100%)] shadow-[0_-4px_30px_rgba(0,0,0,0.18)]">
      <DockGradients />
      {dockApps.map((app, i) =>
        app === null ? (
          <div key={i} className="w-[26px] shrink-0 flex justify-center">
            <span className="w-px h-[50px] bg-[#2c2c2c]" />
          </div>
        ) : (
          <button type="button" key={i} aria-label={app.name} className="relative flex-1 min-w-0 flex flex-col items-center">
            <svg viewBox="0 0 52 52" className="w-[52px] h-[52px] shrink-0">
              {app.art}
            </svg>
            {app.badge && (
              <span className="absolute top-0 right-[1px] h-5 min-w-5 px-[3px] rounded-full bg-[#fb3f3a] text-white text-[11px] leading-5 text-center">
                {app.badge}
              </span>
            )}
            {app.running && <span className="mt-1 w-1 h-1 rounded-full bg-black" />}
          </button>
        )
      )}
    </div>
  );
}

export default function App() {
  return (
    <div className="relative h-screen flex flex-col overflow-hidden bg-[#07101f] font-['Inter',sans-serif]">
      {/* desktop background, only a strip of it is visible on the left */}
      <div className="absolute inset-0 bg-[linear-gradient(to_bottom,#071120_0%,#0d1a30_10%,#1d3048_22%,#344b64_40%,#3b5067_43%,#222437_44%,#25283c_48%,#15182e_53%,#454a5e_55%,#4f5468_62%,#353b50_70%,#42475a_75%,#4b5163_77%,#101f36_78%,#0a1426_90%,#050b18_100%)]" />
      <div className="absolute top-[22px] inset-x-0 h-[13px] bg-[#071225]" />
      <div className="absolute bottom-0 right-0 w-[60px] h-[60px] bg-black border-b-8 border-[#262626]" />
      <span className="absolute top-[329px] left-0 text-[12px] leading-4 font-semibold text-[#e4e7ec]">Fusion</span>
      <span className="absolute top-[33px] left-[735px] w-[42px] h-[2px] bg-[#c9c9c9]" />
      <span className="absolute top-8 left-[1345px] w-7 h-[3px] rounded-tr-[4px] bg-[#cbccc9]" />
      <span className="absolute top-8 left-[1471px] w-9 h-[3px] rounded-tr-[4px] border-l-8 border-[#4d6f8c] bg-[#cbccc9]" />
      <span className="absolute top-8 left-[1837px] w-9 h-[3px] rounded-tr-[4px] border-l-8 border-[#4d6f8c] bg-[#cbccc9]" />

      <div className="relative flex-1 min-h-0 flex flex-col">
        <MenuBar />
        <div className="flex-1 min-h-0 flex mt-[13px] ml-[17px] mb-[59px] rounded-l-[5px] overflow-hidden">
          <SpacesBar />
          <div className="flex-1 min-w-0 flex flex-col">
            <TitleBar />
            <div className="flex-1 min-h-0 flex">
              <FolderPane />
              <MailArea />
            </div>
            <StatusBar />
          </div>
        </div>
      </div>

      <Dock />
    </div>
  );
}
